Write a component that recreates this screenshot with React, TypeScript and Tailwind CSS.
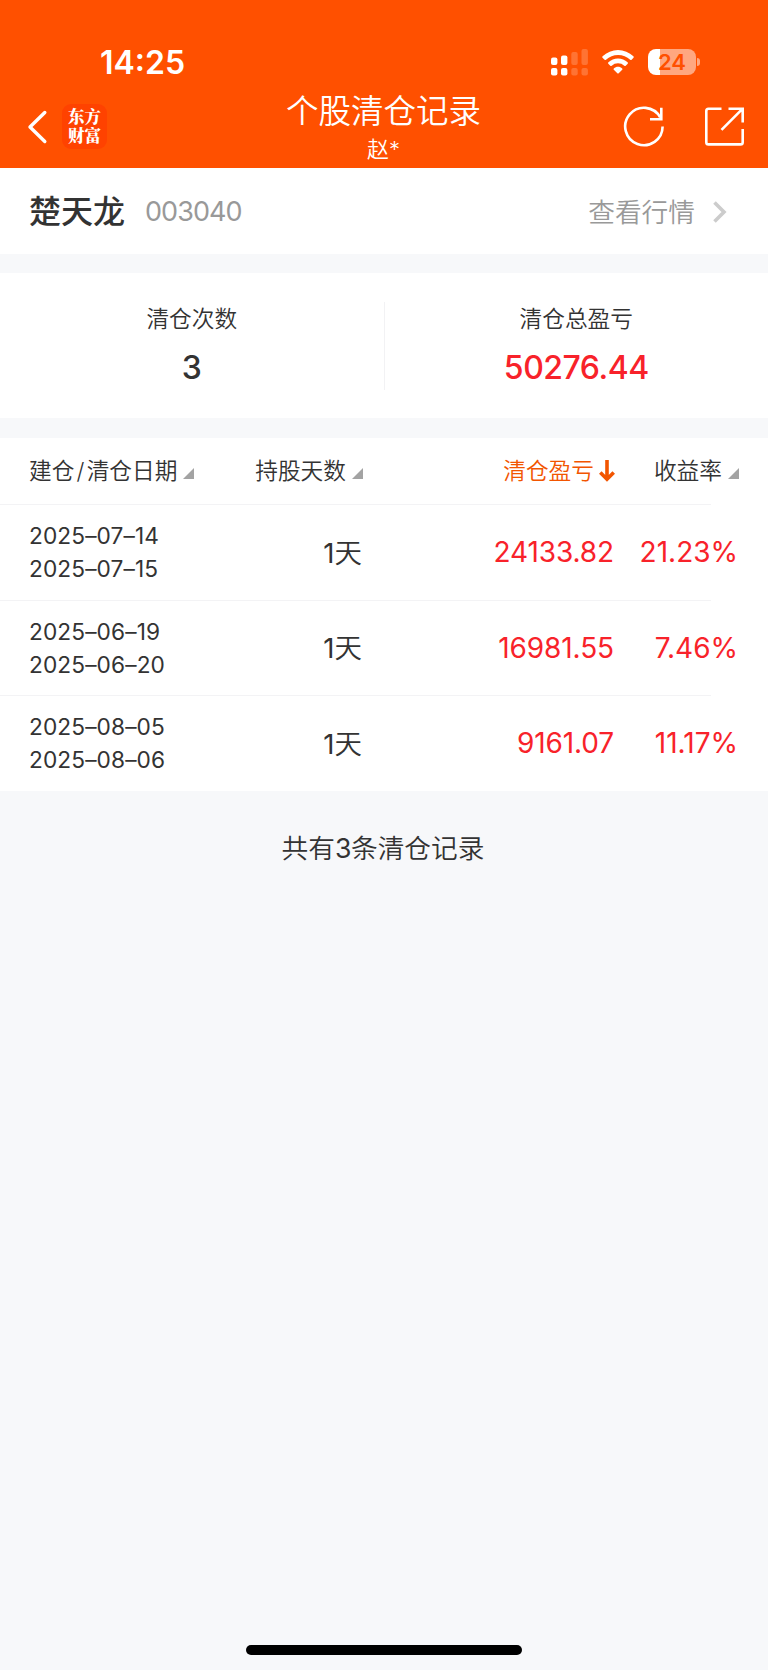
import type { ReactNode } from "react";

type Trade = { open: string; close: string; days: number; profit: string; rate: string };

const trades: Trade[] = [
  { open: "2025–07–14", close: "2025–07–15", days: 1, profit: "24133.82", rate: "21.23%" },
  { open: "2025–06–19", close: "2025–06–20", days: 1, profit: "16981.55", rate: "7.46%" },
  { open: "2025–08–05", close: "2025–08–06", days: 1, profit: "9161.07", rate: "11.17%" },
];

function StatusBar() {
  return (
    <div className="flex h-[84px] items-start">
      <div className="ml-[100px] mt-[43px] w-[119px] text-[32px] font-semibold leading-[40px]">14:25</div>
      <svg className="ml-[331px] mt-[48px]" width="38" height="28" viewBox="0 0 38 28" fill="#fff">
        <rect x="1" y="9.5" width="6.4" height="7.5" rx="2" />
        <rect x="1" y="20" width="6.4" height="7.4" rx="2" />
        <rect x="11" y="7.5" width="6.4" height="9.5" rx="2" />
        <rect x="11" y="20" width="6.4" height="7.4" rx="2" />
        <g opacity=".2">
          <rect x="21.3" y="4" width="6.4" height="13" rx="2" />
          <rect x="21.3" y="20" width="6.4" height="7.4" rx="2" />
          <rect x="31.5" y="1" width="6.4" height="16" rx="2" />
          <rect x="31.5" y="20" width="6.4" height="7.4" rx="2" />
        </g>
      </svg>
      <svg className="ml-[13px] mt-[49px]" width="34" height="26" viewBox="0 0 34 26" fill="#fff">
        <path d="M1.6 7.3a22.2 22.2 0 0 1 30.8 0c.5.5.5 1 .1 1.5l-1.9 1.9c-.4.4-.9.4-1.4 0a17.6 17.6 0 0 0-24.2 0c-.5.4-1 .4-1.4 0L1.5 8.8c-.4-.5-.4-1 .1-1.5z" />
        <path d="M7.4 13.3a13.9 13.9 0 0 1 19.2 0c.5.5.5 1 .1 1.5l-2 2c-.4.4-.9.4-1.4 0a9.2 9.2 0 0 0-12.6 0c-.5.4-1 .4-1.4 0l-2-2c-.4-.5-.4-1 .1-1.5z" />
        <path d="M12.8 19.4c2.4-2.1 6-2.1 8.4 0 .4.4.4.9 0 1.3l-3.500 3.500c-.4.4-1 .4-1.400 0l-3.500-3.500c-.4-.4-.4-.9 0-1.300z" />
      </svg>
      <div className="ml-[13px] mt-[49px] flex items-center">
        <div className="flex h-[26px] w-[48px] items-center justify-center rounded-[8px] bg-[linear-gradient(90deg,#fff_12px,#ffa780_12px)] text-[22px] font-semibold leading-[26px] text-[#ff5000]">
          24
        </div>
        <div className="ml-[1px] h-[8px] w-[3px] rounded-r-full bg-[#ffa780]" />
      </div>
    </div>
  );
}

function NavBar() {
  return (
    <div className="flex h-[84px] justify-between">
      <div className="flex w-[220px]">
        <svg className="ml-[26px] mt-[25px]" width="22" height="36" viewBox="0 0 22 36" fill="none" stroke="#fff" strokeWidth="3.4" strokeLinecap="round" strokeLinejoin="round">
          <path d="M18.8 3.5 4 18l14.8 14.5" />
        </svg>
        <div className="ml-[14px] mt-[20px] h-[45px] w-[45px] rounded-[9px] bg-[#ff4200] pt-[3px] text-center font-['Noto_Serif_CJK_SC','Noto_Sans_CJK_SC',sans-serif] text-[16.5px] font-black leading-[19px]">
          东方
          <br />
          财富
        </div>
      </div>
      <div className="flex flex-col items-center pr-px">
        <h1 className="mt-[6px] text-[32.5px] font-[350] leading-[44px]">个股清仓记录</h1>
        <div className="-mt-px text-[22px] font-[350] leading-[32px]">赵*</div>
      </div>
      <div className="flex w-[220px] justify-end">
        <svg className="mt-[20px]" width="44" height="44" viewBox="0 0 44 44" fill="none" stroke="#fff" strokeWidth="2.6">
          <path d="M40.6 22.5A18.700 18.700 0 1 1 38.200 13.300" />
          <path d="M39.300 3.700v11.600H28" />
        </svg>
        <svg className="ml-[35px] mr-[23px] mt-[20px]" width="44" height="44" viewBox="0 0 44 44" fill="none" stroke="#fff" strokeWidth="2.6">
          <path d="M20.500 4.700H7.500a2.200 2.200 0 0 0-2.200 2.200V38.200a2.200 2.200 0 0 0 2.200 2.200H39.500a2.200 2.200 0 0 0 2.200-2.200V25" />
          <path d="M27.500 4.700H41.700V18.500M41.200 5.200 20.500 25.800" />
        </svg>
      </div>
    </div>
  );
}

function SortMark() {
  return (
    <svg className="mt-[4px] shrink-0" width="11" height="11" viewBox="0 0 11 11" fill="#a3a3a3">
      <path d="M11 0V11H0z" />
    </svg>
  );
}

function Summary({ label, children }: { label: string; children: ReactNode }) {
  return (
    <div className="flex flex-1 flex-col items-center">
      <div className="mt-[30px] text-[22.7px] font-[350] leading-[32px]">{label}</div>
      {children}
    </div>
  );
}

const columns = "grid grid-cols-[220px_145px_251px_152px]";

export default function App() {
  return (
    <div className="flex h-[1670px] w-[768px] flex-col bg-[#f7f8fa] font-['Inter','Noto_Sans_CJK_SC',sans-serif] text-[#333]">
      <header className="h-[168px] bg-[#ff5000] text-white">
        <StatusBar />
        <NavBar />
      </header>

      <section className="flex h-[86px] items-center bg-white pl-[29px] pr-[41px] pt-[2px]">
        <h2 className="text-[32px] font-medium leading-[44px]">楚天龙</h2>
        <span className="ml-[20px] text-[27px] font-normal leading-[40px] tracking-[-0.95px] text-[#999]">003040</span>
        <div className="ml-auto flex items-center text-[26.7px] font-[350] leading-[40px] text-[#999]">
          查看行情
          <svg className="ml-[18px]" width="14" height="22" viewBox="0 0 14 22" fill="none" stroke="#ccc" strokeWidth="3.6">
            <path d="M1.5 1.5 11 11l-9.5 9.5" />
          </svg>
        </div>
      </section>

      <section className="mt-[19px] flex h-[145px] bg-white">
        <Summary label="清仓次数">
          <div className="mt-[13px] text-[32px] font-medium leading-[40px]">3</div>
        </Summary>
        <div className="mt-[29px] h-[88px] w-px bg-[#f2f2f4]" />
        <Summary label="清仓总盈亏">
          <div className="mt-[13px] text-[32px] font-medium leading-[40px] tracking-[-0.5px] text-[#f8222a]">50276.44</div>
        </Summary>
      </section>

      <section className="mt-[20px] bg-white">
        <div className={`${columns} h-[66px] text-[22.7px] font-[350] leading-[32px]`}>
          <div className="flex items-center gap-[6px] pl-[29px]">
            <span>建仓<span className="mx-[2.2px]">/</span>清仓日期</span>
            <SortMark />
          </div>
          <div className="flex items-center justify-end gap-[6px] pr-[2px]">持股天数<SortMark /></div>
          <div className="flex items-center justify-end gap-[5px] pr-[1px] text-[#f25500]">
            清仓盈亏
            <svg width="16" height="22" viewBox="0 0 16 22" fill="none" stroke="#f25500" strokeWidth="3.6">
              <path d="M8 0V19M1.3 12.5 8 19.2l6.700-6.700" />
            </svg>
          </div>
          <div className="flex items-center justify-end gap-[6px] pr-[29px]">收益率<SortMark /></div>
        </div>
        {trades.map((t) => (
          <div key={t.open} className="h-[95.67px]">
            <div className="h-px w-[711px] bg-[#f3f3f5]" />
            <div className={`${columns} h-[94px] items-center`}>
              <div className="pl-[29px] text-[22.7px] font-normal leading-[33px] tracking-[0.1px]">
                <div>{t.open}</div>
                <div>{t.close}</div>
              </div>
              <div className="pr-[3px] pt-px text-right text-[27.5px] font-[350] leading-[40px]">
                <span className="font-normal">{t.days}</span>天
              </div>
              <div className="pr-[2px] text-right text-[28px] font-normal leading-[40px] tracking-[-0.1px] text-[#f8222a]">{t.profit}</div>
              <div className="pr-[30px] text-right text-[28px] font-normal leading-[40px] text-[#f8222a]">{t.rate}</div>
            </div>
          </div>
        ))}
      </section>

      <p className="mt-[37px] pr-[2px] text-center text-[26.7px] font-[350] leading-[40px]">
        共有<span className="font-normal tracking-[-0.5px]">3</span>条清仓记录
      </p>

      <div className="mx-auto mb-[15px] mt-auto h-[10px] w-[276px] rounded-full bg-black" />
    </div>
  );
}
